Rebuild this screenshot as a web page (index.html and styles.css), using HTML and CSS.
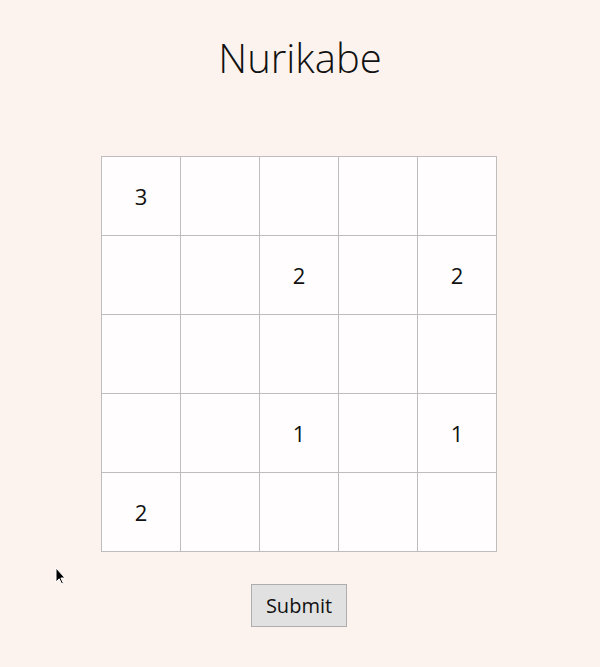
FILE: index.html
```html
<!DOCTYPE html>
<html>
<head>
<meta charset="utf-8">
<link rel="stylesheet" href="styles.css">
</head>
<body>
<main class="page">
  <h1 class="title">Nurikabe</h1>
  <table class="board">
    <tr><td>3</td><td></td><td></td><td></td><td></td></tr>
    <tr><td></td><td></td><td>2</td><td></td><td>2</td></tr>
    <tr><td></td><td></td><td></td><td></td><td></td></tr>
    <tr><td></td><td></td><td>1</td><td></td><td>1</td></tr>
    <tr><td>2</td><td></td><td></td><td></td><td></td></tr>
  </table>
  <button class="submit">Submit</button>
</main>
<svg class="cursor" width="12" height="19" viewBox="0 0 12 19"><path d="M1 1 L1 15 L4.2 11.8 L6.7 17 L8.4 16.2 L5.9 11 L10 11 Z" fill="#000" stroke="#fff" stroke-width="1"/></svg>
</body>
</html>
```
FILE: styles.css
```css
html, body {
  margin: 0;
  padding: 0;
  background: #fdf3ee;
  font-family: "Open Sans", "Noto Sans", sans-serif;
}
.page {
  display: flex;
  flex-direction: column;
  align-items: center;
}
.title {
  margin: 30px 0 0;
  font-weight: 300;
  font-size: 40px;
  line-height: 56px;
  color: #111;
}
.board {
  margin-top: 70px;
  margin-right: 2px;
  border-collapse: collapse;
  background: #fffdfd;
}
.board td {
  width: 78px;
  height: 78px;
  padding: 0;
  border: 1px solid #bdbdbd;
  text-align: center;
  vertical-align: middle;
  font-size: 22px;
  color: #111;
}
.submit {
  margin-top: 32px;
  margin-right: 2px;
  width: 96px;
  height: 43px;
  background: #e1e1e1;
  border: 1px solid #adadad;
  border-radius: 0;
  font-family: "Open Sans", "Noto Sans", sans-serif;
  font-size: 20px;
  color: #111;
  padding: 0;
}
.cursor {
  position: absolute;
  left: 55px;
  top: 567px;
}
```
